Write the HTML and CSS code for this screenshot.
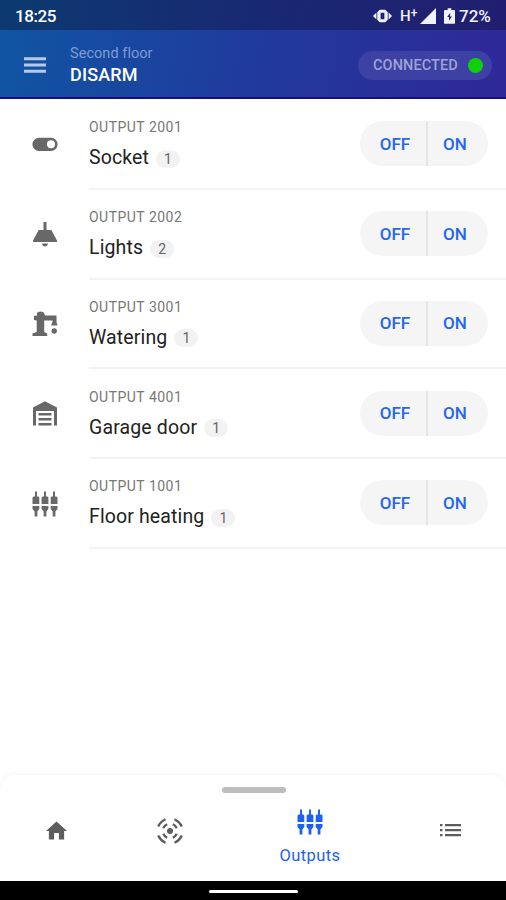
FILE: index.html
```html
<!DOCTYPE html>
<html lang="en">
<head>
<meta charset="utf-8">
<title>Outputs</title>
<link rel="stylesheet" href="styles.css">
</head>
<body>
<svg class="defs" width="0" height="0" aria-hidden="true">
  <symbol id="plugs" viewBox="0 0 26 26">
    <path d="M3 0.500h2v5.500h-2zM12 0.500h2v5.500h-2zM21 0.500h2v5.500h-2zM1.500 5.500h5l.8 1v6.500h-6.800V6.500zM10.500 5.500h5l.9 1v6.500H9.600V6.500zM19.500 5.500h5l1 1v6.500h-6.800V6.500zM.5 15h6.800v3l-1.900 2.500v5H2.600v-5L.5 18zM9.600 15h6.800v3l-2 2.500v5h-2.800v-5l-2-2.500zM18.700 15h6.800v3l-2.100 2.500v5h-2.700v-5l-2-2.500z"/>
  </symbol>
</svg>
<div class="status">
  <span class="time">18:25</span>
  <div class="status-icons">
    <svg class="vibrate" viewBox="0 0 20 14"><path fill-rule="evenodd" d="M7 .5h6L15.500 3v8L13 13.500H7L4.500 11V3zM8 3.500v7h4v-7z"/><path d="M0 7l3.600-3.600v7.200zM20 7l-3.600-3.600v7.200z"/></svg>
    <span class="network">H<sup>+</sup></span>
    <svg class="signal" viewBox="0 0 16 16"><path d="M16 0v16H0z"/></svg>
    <svg class="battery" viewBox="0 0 12 17"><path fill-rule="evenodd" d="M4 0h4v2h3q1 0 1 1v13q0 1-1 1H1q-1 0-1-1V3q0-1 1-1h3zM6.800 5L3.500 9.700h2v4L8.600 9h-2z"/></svg>
    <span class="percent">72%</span>
  </div>
</div>
<header>
  <svg class="menu" viewBox="0 0 23 17"><path d="M0 0h23v3H0zM0 6.500h23v3H0zM0 13h23v3H0z"/></svg>
  <div class="heading"><span class="place">Second floor</span><strong class="mode">DISARM</strong></div>
  <div class="connection"><span>CONNECTED</span><i class="dot"></i></div>
</header>
<main>
  <section class="row">
    <svg class="icon" viewBox="0 0 26 26"><path fill-rule="evenodd" d="M7 5.700h12a6.600 6.600 0 0 1 0 13.200H7A6.600 6.600 0 0 1 7 5.700zM19 8.300a4 4 0 1 0 0 8 4 4 0 0 0 0-8z"/></svg>
    <div class="item"><div class="text"><span class="label">OUTPUT 2001</span><div class="name"><span>Socket</span><b>1</b></div></div><div class="switch"><button class="off">OFF</button><button>ON</button></div></div>
  </section>
  <section class="row">
    <svg class="icon" viewBox="0 0 26 26"><path d="M11.500 0h3v8h4.800L25 18.500V20H1v-1.500L6.700 8h4.800zM10 21.500h6q-.5 3-3 3t-3-3z"/></svg>
    <div class="item"><div class="text"><span class="label">OUTPUT 2002</span><div class="name"><span>Lights</span><b>2</b></div></div><div class="switch"><button class="off">OFF</button><button>ON</button></div></div>
  </section>
  <section class="row">
    <svg class="icon" viewBox="0 0 26 26"><path d="M5 2Q5.500.500 8.500.500T12 2l1 2.500h11.500V11l1 3.500H19l1.500-3.500v-1.500h-8.300V21l3 1.500V25H.500v-2.500L4.700 21V9.500L2 9V5l3-.500z"/><circle cx="22.200" cy="20" r="2.700"/></svg>
    <div class="item"><div class="text"><span class="label">OUTPUT 3001</span><div class="name"><span>Watering</span><b>1</b></div></div><div class="switch"><button class="off">OFF</button><button>ON</button></div></div>
  </section>
  <section class="row">
    <svg class="icon" viewBox="0 0 26 26"><path fill-rule="evenodd" d="M13 .3L25 6.500v18h-3V10H4v14.500H1v-18zM6.500 12h13v2.500h-13zM6.500 17h13v2.500h-13zM6.500 22h13v2.500h-13z"/></svg>
    <div class="item"><div class="text"><span class="label">OUTPUT 4001</span><div class="name"><span>Garage door</span><b>1</b></div></div><div class="switch"><button class="off">OFF</button><button>ON</button></div></div>
  </section>
  <section class="row">
    <svg class="icon"><use href="#plugs"/></svg>
    <div class="item"><div class="text"><span class="label">OUTPUT 1001</span><div class="name"><span>Floor heating</span><b>1</b></div></div><div class="switch"><button class="off">OFF</button><button>ON</button></div></div>
  </section>
</main>
<nav>
  <div class="handle"></div>
  <div class="tabs">
    <a class="tab"><svg class="home" viewBox="0 0 22 19"><path d="M11 0l11 10h-3v9h-5.500v-7h-5v7H3v-9H0z"/></svg></a>
    <a class="tab"><svg class="sensor" viewBox="0 0 26 26"><circle cx="13" cy="13" r="3"/><path d="M1.200 8.500Q3.500 3.500 8.500 1.200M17.500 1.200q5 2.300 7.300 7.300M24.800 17.500q-2.300 5-7.300 7.300M8.500 24.800q-5-2.300-7.300-7.300M6.300 10.200q1.200-2.700 3.900-3.900M15.800 6.300q2.700 1.200 3.900 3.900M19.700 15.800q-1.200 2.700-3.900 3.900M10.200 19.700q-2.700-1.200-3.900-3.900"/></svg></a>
    <a class="tab active"><svg class="icon-active"><use href="#plugs"/></svg><span>Outputs</span></a>
    <a class="tab"><svg class="list" viewBox="0 0 21 13"><path d="M0 0h2.500v2.300H0zM5 0h16v2.300H5zM0 5h2.500v2.300H0zM5 5h16v2.300H5zM0 10h2.500v2.300H0zM5 10h16v2.300H5z"/></svg></a>
  </div>
</nav>
<footer><div class="gesture"></div></footer>
</body>
</html>
```
FILE: styles.css
```css
* { box-sizing: border-box; }
body {
  margin: 0;
  width: 506px;
  height: 900px;
  display: flex;
  flex-direction: column;
  overflow: hidden;
  background: #fff;
  font-family: Roboto, "Liberation Sans", sans-serif;
}
svg { display: block; flex: none; fill: currentColor; }
.defs { position: absolute; }
.status {
  height: 30px;
  flex: none;
  display: flex;
  justify-content: space-between;
  align-items: center;
  padding: 2px 14px 0 15px;
  background: linear-gradient(100deg, #0c3a70, #182973 50%, #211e70);
  color: #fff;
  font-size: 17px;
  font-weight: 500;
}
.time { letter-spacing: -.4px; }
.status-icons { display: flex; align-items: center; color: #f0f2ff; }
.vibrate { width: 19px; height: 14px; margin-right: 8px; }
.network { width: 20px; font-size: 15px; line-height: 16px; white-space: nowrap; }
.network sup { font-size: 12px; line-height: 0; vertical-align: 4px; }
.signal { width: 16px; height: 16px; margin-right: 8px; }
.battery { width: 11px; height: 16px; margin-right: 4px; }
.percent { width: 33px; white-space: nowrap; }
header {
  height: 69px;
  flex: none;
  display: flex;
  align-items: center;
  padding: 0 14px 0 24px;
  border-bottom: 2px solid #160d87;
  background: linear-gradient(100deg, #1055a3, #203a9d 50%, #2f2898);
  color: #fff;
}
.menu { width: 22px; height: 17px; margin: 3px 24px 0 0; color: #b7c9e9; }
.heading { display: flex; flex-direction: column; flex: 1; }
.place { font-size: 14.500px; line-height: 21px; color: #7f9cd3; letter-spacing: .05px; }
.mode { font-size: 18px; line-height: 21px; font-weight: 500; letter-spacing: .15px; }
.connection {
  width: 134px;
  height: 29px;
  margin-top: 3px;
  border-radius: 15px;
  padding: 0 9px 0 15px;
  display: flex;
  align-items: center;
  justify-content: space-between;
  background: #3d41a3;
  color: #9ea3d5;
  font-size: 14.500px;
  font-weight: 500;
  letter-spacing: .1px;
}
.dot { width: 15px; height: 15px; border-radius: 50%; background: #10cf0b; }
main { flex: 1; padding-top: 1px; }
.row { height: 89.750px; display: flex; align-items: center; padding-left: 32px; }
.icon { width: 26px; height: 26px; margin-right: 31px; color: #686868; }
.item {
  flex: 1;
  height: 100%;
  display: flex;
  align-items: center;
  justify-content: space-between;
  padding-right: 18px;
  border-bottom: 2px solid #f3f3f3;
}
.text { padding-top: 1px; }
.label { display: block; font-size: 14px; line-height: 18px; color: #777; letter-spacing: .48px; }
.name { display: flex; align-items: center; gap: 7px; margin-top: 10px; font-size: 19.500px; line-height: 24px; color: #222; letter-spacing: .13px; }
.name b {
  width: 24px;
  height: 18px;
  margin-top: 1px;
  border-radius: 9px;
  background: #f2f2f2;
  color: #666;
  font-size: 14px;
  line-height: 18px;
  font-weight: 400;
  text-align: center;
}
.switch { width: 128px; height: 45px; display: flex; border-radius: 23px; overflow: hidden; background: #f5f5f5; }
.switch button { flex: 1; border: 0; padding: 0 6px 0 0; background: none; color: #2466ee; font: 500 17px Roboto, sans-serif; }
.switch .off { flex: 0 0 68px; padding: 0 0 0 4px; border-right: 2px solid #e5e5e5; }
nav {
  height: 106px;
  flex: none;
  border-radius: 16px 16px 0 0;
  background: #fff;
  box-shadow: 0 -2px 5px rgba(0, 0, 0, .035);
}
.handle { width: 64px; height: 6px; margin: 12px 0 0 222px; border-radius: 3px; background: #bdbdbd; }
.tabs { display: grid; grid-template-columns: 113px 113px 168px 112px; height: 82px; }
.tab { display: flex; flex-direction: column; align-items: center; justify-content: center; padding-bottom: 7px; color: #5d5d5d; }
.home { width: 21px; height: 19px; }
.sensor { width: 26px; height: 26px; }
.sensor path { fill: none; stroke: currentColor; stroke-width: 2.300; }
.list { width: 21px; height: 13px; }
.tab.active { padding: 6px 0 0; color: #1e61ef; }
.icon-active { width: 26px; height: 26px; }
.active span { margin-top: 11px; font-size: 16.500px; line-height: 20px; letter-spacing: .4px; }
footer { height: 19px; flex: none; background: #000; padding-top: 9px; }
.gesture { width: 89px; height: 3px; margin-left: 209px; border-radius: 2px; background: #fff; }
```
